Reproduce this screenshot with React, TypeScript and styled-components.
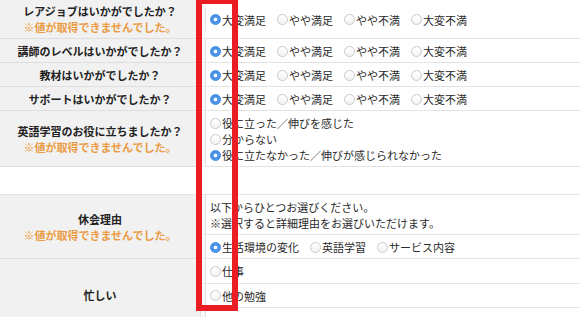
import styled, { createGlobalStyle } from "styled-components";

const GlobalStyle = createGlobalStyle`
  html, body {
    margin: 0;
    padding: 0;
    background: #fff;
    overflow: hidden;
  }
  body {
    font-family: "Noto Sans CJK JP", "Noto Sans", sans-serif;
    color: #222;
  }
`;

const satisfaction = ["大変満足", "やや満足", "やや不満", "大変不満"];

const ratingRows = [
  { q: "レアジョブはいかがでしたか？", error: true },
  { q: "講師のレベルはいかがでしたか？", error: false },
  { q: "教材はいかがでしたか？", error: false },
  { q: "サポートはいかがでしたか？", error: false },
];

const usefulOptions = [
  "役に立った／伸びを感じた",
  "分からない",
  "役に立たなかった／伸びが感じられなかった",
];

const ERROR_TEXT = "※値が取得できませんでした。";

function Radio({ label, checked }: { label: string; checked?: boolean }) {
  return (
    <Option>
      <RadioMark $checked={checked} />
      {label}
    </Option>
  );
}

function Question({ text, error }: { text: string; error?: boolean }) {
  return (
    <Head>
      {text}
      {error && <ErrorNote>{ERROR_TEXT}</ErrorNote>}
    </Head>
  );
}

export default function App() {
  return (
    <Page>
      <GlobalStyle />
      <Table>
        <colgroup>
          <col style={{ width: 201 }} />
          <col />
        </colgroup>
        <tbody>
          {ratingRows.map((row) => (
            <tr key={row.q}>
              <Question text={row.q} error={row.error} />
              <Cell>
                <Box>
                  <Group>
                    {satisfaction.map((s, i) => (
                      <Radio key={s} label={s} checked={i === 0} />
                    ))}
                  </Group>
                </Box>
              </Cell>
            </tr>
          ))}
          <tr>
            <Question text="英語学習のお役に立ちましたか？" error />
            <Cell>
              <Box>
                <Group $stack>
                  {usefulOptions.map((s, i) => (
                    <Radio key={s} label={s} checked={i === 2} />
                  ))}
                </Group>
              </Box>
            </Cell>
          </tr>
          <tr>
            <Spacer colSpan={2} />
          </tr>
          <tr>
            <Head rowSpan={2}>
              休会理由
              <ErrorNote>{ERROR_TEXT}</ErrorNote>
            </Head>
            <Cell>
              <Box>
                以下からひとつお選びください。
                <br />
                ※選択すると詳細理由をお選びいただけます。
              </Box>
            </Cell>
          </tr>
          <tr>
            <Cell>
              <Box>
                <Group>
                  <Radio label="生活環境の変化" checked />
                  <Radio label="英語学習" />
                  <Radio label="サービス内容" />
                </Group>
              </Box>
            </Cell>
          </tr>
          <tr>
            <Head rowSpan={3}>忙しい</Head>
            <Cell>
              <Box>
                <Radio label="仕事" />
              </Box>
            </Cell>
          </tr>
          <tr>
            <Cell>
              <Box>
                <Radio label="他の勉強" />
              </Box>
            </Cell>
          </tr>
          <tr>
            <Cell>
              <Box>&nbsp;</Box>
            </Cell>
          </tr>
        </tbody>
      </Table>
      <RedFrame />
    </Page>
  );
}

const Page = styled.div`
  position: relative;
  width: 580px;
  height: 317px;
  overflow: hidden;
`;

const Table = styled.table`
  width: 100%;
  table-layout: fixed;
  border-collapse: separate;
  border-spacing: 0;
  font-size: 11px;
  line-height: 16px;
`;

const Head = styled.th`
  background: #f1f1f1;
  border-bottom: 1px solid #dedede;
  border-right: 1px solid #e2e2e2;
  color: #222;
  font-weight: bold;
  text-align: center;
  vertical-align: middle;
  padding: 3px 4px;
`;

const ErrorNote = styled.div`
  color: #eb9b44;
  font-weight: bold;
`;

const Cell = styled.td`
  padding: 0;
  border-left: 4px solid #f7f7f7;
  border-bottom: 1px solid #e3e3e3;
  vertical-align: middle;
  color: #2a2a2a;
`;

const Box = styled.div`
  box-shadow: inset 1px 0 0 #e2e2e2;
  padding: 4px 5px 3px 5px;
`;

const Group = styled.div<{ $stack?: boolean }>`
  display: flex;
  flex-direction: ${(p) => (p.$stack ? "column" : "row")};
  align-items: flex-start;
`;

const Option = styled.label`
  display: inline-flex;
  align-items: center;
  margin-right: 11px;
  white-space: nowrap;
`;

const RadioMark = styled.span<{ $checked?: boolean }>`
  display: inline-block;
  box-sizing: border-box;
  width: 11px;
  height: 11px;
  margin-right: 1px;
  border-radius: 50%;
  border: 1px solid ${(p) => (p.$checked ? "#3f89e4" : "#c9c9c9")};
  background: ${(p) =>
    p.$checked
      ? "radial-gradient(circle, #fff 0 1.5px, #4c94ea 2.2px)"
      : "linear-gradient(#fff, #f3f3f3)"};
`;

const Spacer = styled.td`
  height: 27px;
  padding: 0;
  border-bottom: 1px solid #e3e3e3;
`;

const RedFrame = styled.div`
  position: absolute;
  left: 196px;
  top: -2px;
  width: 42px;
  height: 313px;
  box-sizing: border-box;
  border: 6px solid #ea1c24;
  pointer-events: none;
`;
